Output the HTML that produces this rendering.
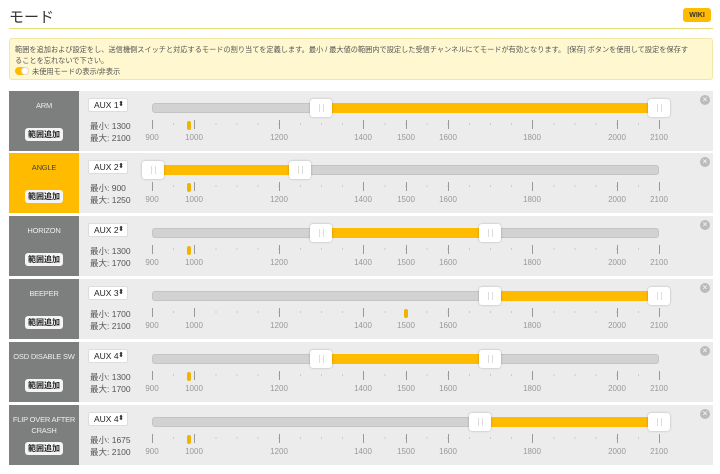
<!DOCTYPE html>
<html><head><meta charset="utf-8"><style>
*{margin:0;padding:0;box-sizing:border-box}
body{width:720px;height:474px;background:#fff;font-family:"Liberation Sans","Noto Sans CJK JP",sans-serif;position:relative;overflow:hidden}
.a{position:absolute}
h1{position:absolute;left:9px;top:6px;font-size:15px;font-weight:normal;color:#333}
.row{position:absolute;left:9px;width:704px;height:60px;background:#ececec}
.lp{position:absolute;left:0;top:0;width:70px;height:100%;background:#7c7f7d;color:#eee;font-size:7.5px;letter-spacing:-0.2px;text-align:center}
.lp.on{background:#ffbb00;color:#444}
.lp .t{position:absolute;left:0;right:0;top:9px;line-height:11px;white-space:nowrap}
.btn{position:absolute;left:16px;top:37px;width:38px;height:13px;background:#f4f4f4;border-radius:3px;color:#222;font-size:8px;font-weight:bold;line-height:13px;text-align:center;letter-spacing:0}
.sel{position:absolute;left:79px;top:7px;width:40px;height:14px;background:#fff;border:1px solid #ddd;border-radius:2px;font-size:8.5px;line-height:12px;padding-left:5px;color:#222}
.sel:after{content:"⬍";position:absolute;right:3px;top:0;font-size:7px}
.mm{position:absolute;left:81px;font-size:8.5px;color:#555}
.trk{position:absolute;left:143px;top:12px;width:507px;height:10px;background:#d2d2d2;border:1px solid #c4c4c4;border-radius:3px}
.fill{position:absolute;top:12px;height:10px;background:#ffbb00}
.h{position:absolute;top:8px;width:22px;height:18px;background:#fff;border-radius:3px;box-shadow:0 0 2px rgba(0,0,0,.25)}
.h:after{content:"";position:absolute;left:9px;top:5px;width:3px;height:8px;border-left:1px solid #ddd;border-right:1px solid #ddd}
.minor{position:absolute;left:143px;top:32px;width:509px;height:2px;background:repeating-linear-gradient(90deg,#ccc 0 1px,transparent 1px 21.125px)}
.M{position:absolute;top:29px;width:1px;height:9px;background:#999}
.L{position:absolute;top:42px;width:30px;margin-left:-15px;text-align:center;font-size:8px;color:#999}
.mk{position:absolute;top:30px;width:4px;height:9px;background:#f0b400;border-radius:2px}
.x{position:absolute;left:691px;top:4px;width:10px;height:10px;border-radius:50%;background:#bbb;color:#eee;font-size:8px;line-height:10px;text-align:center;font-weight:bold}
</style></head><body>
<h1>モード</h1>
<div class="a" style="left:683px;top:8px;width:28px;height:14px;background:#ffbb00;border-radius:3px;font-size:7px;font-weight:bold;color:#333;display:flex;align-items:center;justify-content:center">WIKI</div>
<div class="a" style="left:9px;top:28px;width:704px;height:1px;background:#e8dc74"></div>
<div class="a" style="left:9px;top:38px;width:704px;height:42px;background:#fff7cf;border:1px solid #f2e7a6;border-radius:3px;font-size:7.2px;color:#555;padding:5px 0 0 5px;line-height:11px">範囲を追加および設定をし、送信機側スイッチと対応するモードの割り当てを定義します。最小 / 最大値の範囲内で設定した受信チャンネルにてモードが有効となります。 [保存] ボタンを使用して設定を保存す<br>ることを忘れないで下さい。<br><span style="display:inline-block;width:14px;height:8px;border-radius:4px;background:#ffbb00;vertical-align:-1px;position:relative;margin-right:3px"><span style="position:absolute;right:0;top:0;width:8px;height:8px;border-radius:50%;background:#fff;border:1px solid #ddd"></span></span>未使用モードの表示/非表示</div>

<div class="row" style="top:91px">
<div class="lp"><div class="t">ARM</div><div class="btn">範囲追加</div></div>
<div class="sel">AUX 1</div><div class="mm" style="top:29px">最小: 1300</div><div class="mm" style="top:41px">最大: 2100</div>
<div class="trk"></div><div class="fill" style="left:312px;width:338px"></div>
<div class="h" style="left:301px"></div><div class="h" style="left:639px"></div>
<div class="minor"></div>
<div class="M" style="left:143px"></div><div class="M" style="left:185px"></div><div class="M" style="left:270px"></div><div class="M" style="left:354px"></div><div class="M" style="left:397px"></div><div class="M" style="left:439px"></div><div class="M" style="left:523px"></div><div class="M" style="left:608px"></div><div class="M" style="left:650px"></div>
<div class="L" style="left:143px">900</div><div class="L" style="left:185px">1000</div><div class="L" style="left:270px">1200</div><div class="L" style="left:354px">1400</div><div class="L" style="left:397px">1500</div><div class="L" style="left:439px">1600</div><div class="L" style="left:523px">1800</div><div class="L" style="left:608px">2000</div><div class="L" style="left:650px">2100</div>
<div class="mk" style="left:178px"></div><div class="x">×</div>
</div>

<div class="row" style="top:153px">
<div class="lp on"><div class="t">ANGLE</div><div class="btn">範囲追加</div></div>
<div class="sel">AUX 2</div><div class="mm" style="top:29px">最小: 900</div><div class="mm" style="top:41px">最大: 1250</div>
<div class="trk"></div><div class="fill" style="left:143px;width:148px"></div>
<div class="h" style="left:133px"></div><div class="h" style="left:280px"></div>
<div class="minor"></div>
<div class="M" style="left:143px"></div><div class="M" style="left:185px"></div><div class="M" style="left:270px"></div><div class="M" style="left:354px"></div><div class="M" style="left:397px"></div><div class="M" style="left:439px"></div><div class="M" style="left:523px"></div><div class="M" style="left:608px"></div><div class="M" style="left:650px"></div>
<div class="L" style="left:143px">900</div><div class="L" style="left:185px">1000</div><div class="L" style="left:270px">1200</div><div class="L" style="left:354px">1400</div><div class="L" style="left:397px">1500</div><div class="L" style="left:439px">1600</div><div class="L" style="left:523px">1800</div><div class="L" style="left:608px">2000</div><div class="L" style="left:650px">2100</div>
<div class="mk" style="left:178px"></div><div class="x">×</div>
</div>

<div class="row" style="top:216px">
<div class="lp"><div class="t">HORIZON</div><div class="btn">範囲追加</div></div>
<div class="sel">AUX 2</div><div class="mm" style="top:29px">最小: 1300</div><div class="mm" style="top:41px">最大: 1700</div>
<div class="trk"></div><div class="fill" style="left:312px;width:169px"></div>
<div class="h" style="left:301px"></div><div class="h" style="left:470px"></div>
<div class="minor"></div>
<div class="M" style="left:143px"></div><div class="M" style="left:185px"></div><div class="M" style="left:270px"></div><div class="M" style="left:354px"></div><div class="M" style="left:397px"></div><div class="M" style="left:439px"></div><div class="M" style="left:523px"></div><div class="M" style="left:608px"></div><div class="M" style="left:650px"></div>
<div class="L" style="left:143px">900</div><div class="L" style="left:185px">1000</div><div class="L" style="left:270px">1200</div><div class="L" style="left:354px">1400</div><div class="L" style="left:397px">1500</div><div class="L" style="left:439px">1600</div><div class="L" style="left:523px">1800</div><div class="L" style="left:608px">2000</div><div class="L" style="left:650px">2100</div>
<div class="mk" style="left:178px"></div><div class="x">×</div>
</div>

<div class="row" style="top:279px">
<div class="lp"><div class="t">BEEPER</div><div class="btn">範囲追加</div></div>
<div class="sel">AUX 3</div><div class="mm" style="top:29px">最小: 1700</div><div class="mm" style="top:41px">最大: 2100</div>
<div class="trk"></div><div class="fill" style="left:481px;width:169px"></div>
<div class="h" style="left:470px"></div><div class="h" style="left:639px"></div>
<div class="minor"></div>
<div class="M" style="left:143px"></div><div class="M" style="left:185px"></div><div class="M" style="left:270px"></div><div class="M" style="left:354px"></div><div class="M" style="left:439px"></div><div class="M" style="left:523px"></div><div class="M" style="left:608px"></div><div class="M" style="left:650px"></div>
<div class="L" style="left:143px">900</div><div class="L" style="left:185px">1000</div><div class="L" style="left:270px">1200</div><div class="L" style="left:354px">1400</div><div class="L" style="left:397px">1500</div><div class="L" style="left:439px">1600</div><div class="L" style="left:523px">1800</div><div class="L" style="left:608px">2000</div><div class="L" style="left:650px">2100</div>
<div class="mk" style="left:395px"></div><div class="x">×</div>
</div>

<div class="row" style="top:342px">
<div class="lp"><div class="t">OSD DISABLE SW</div><div class="btn">範囲追加</div></div>
<div class="sel">AUX 4</div><div class="mm" style="top:29px">最小: 1300</div><div class="mm" style="top:41px">最大: 1700</div>
<div class="trk"></div><div class="fill" style="left:312px;width:169px"></div>
<div class="h" style="left:301px"></div><div class="h" style="left:470px"></div>
<div class="minor"></div>
<div class="M" style="left:143px"></div><div class="M" style="left:185px"></div><div class="M" style="left:270px"></div><div class="M" style="left:354px"></div><div class="M" style="left:397px"></div><div class="M" style="left:439px"></div><div class="M" style="left:523px"></div><div class="M" style="left:608px"></div><div class="M" style="left:650px"></div>
<div class="L" style="left:143px">900</div><div class="L" style="left:185px">1000</div><div class="L" style="left:270px">1200</div><div class="L" style="left:354px">1400</div><div class="L" style="left:397px">1500</div><div class="L" style="left:439px">1600</div><div class="L" style="left:523px">1800</div><div class="L" style="left:608px">2000</div><div class="L" style="left:650px">2100</div>
<div class="mk" style="left:178px"></div><div class="x">×</div>
</div>

<div class="row" style="top:405px">
<div class="lp"><div class="t">FLIP OVER AFTER<br>CRASH</div><div class="btn">範囲追加</div></div>
<div class="sel">AUX 4</div><div class="mm" style="top:29px">最小: 1675</div><div class="mm" style="top:41px">最大: 2100</div>
<div class="trk"></div><div class="fill" style="left:471px;width:179px"></div>
<div class="h" style="left:460px"></div><div class="h" style="left:639px"></div>
<div class="minor"></div>
<div class="M" style="left:143px"></div><div class="M" style="left:185px"></div><div class="M" style="left:270px"></div><div class="M" style="left:354px"></div><div class="M" style="left:397px"></div><div class="M" style="left:439px"></div><div class="M" style="left:523px"></div><div class="M" style="left:608px"></div><div class="M" style="left:650px"></div>
<div class="L" style="left:143px">900</div><div class="L" style="left:185px">1000</div><div class="L" style="left:270px">1200</div><div class="L" style="left:354px">1400</div><div class="L" style="left:397px">1500</div><div class="L" style="left:439px">1600</div><div class="L" style="left:523px">1800</div><div class="L" style="left:608px">2000</div><div class="L" style="left:650px">2100</div>
<div class="mk" style="left:178px"></div><div class="x">×</div>
</div>
</body></html>
